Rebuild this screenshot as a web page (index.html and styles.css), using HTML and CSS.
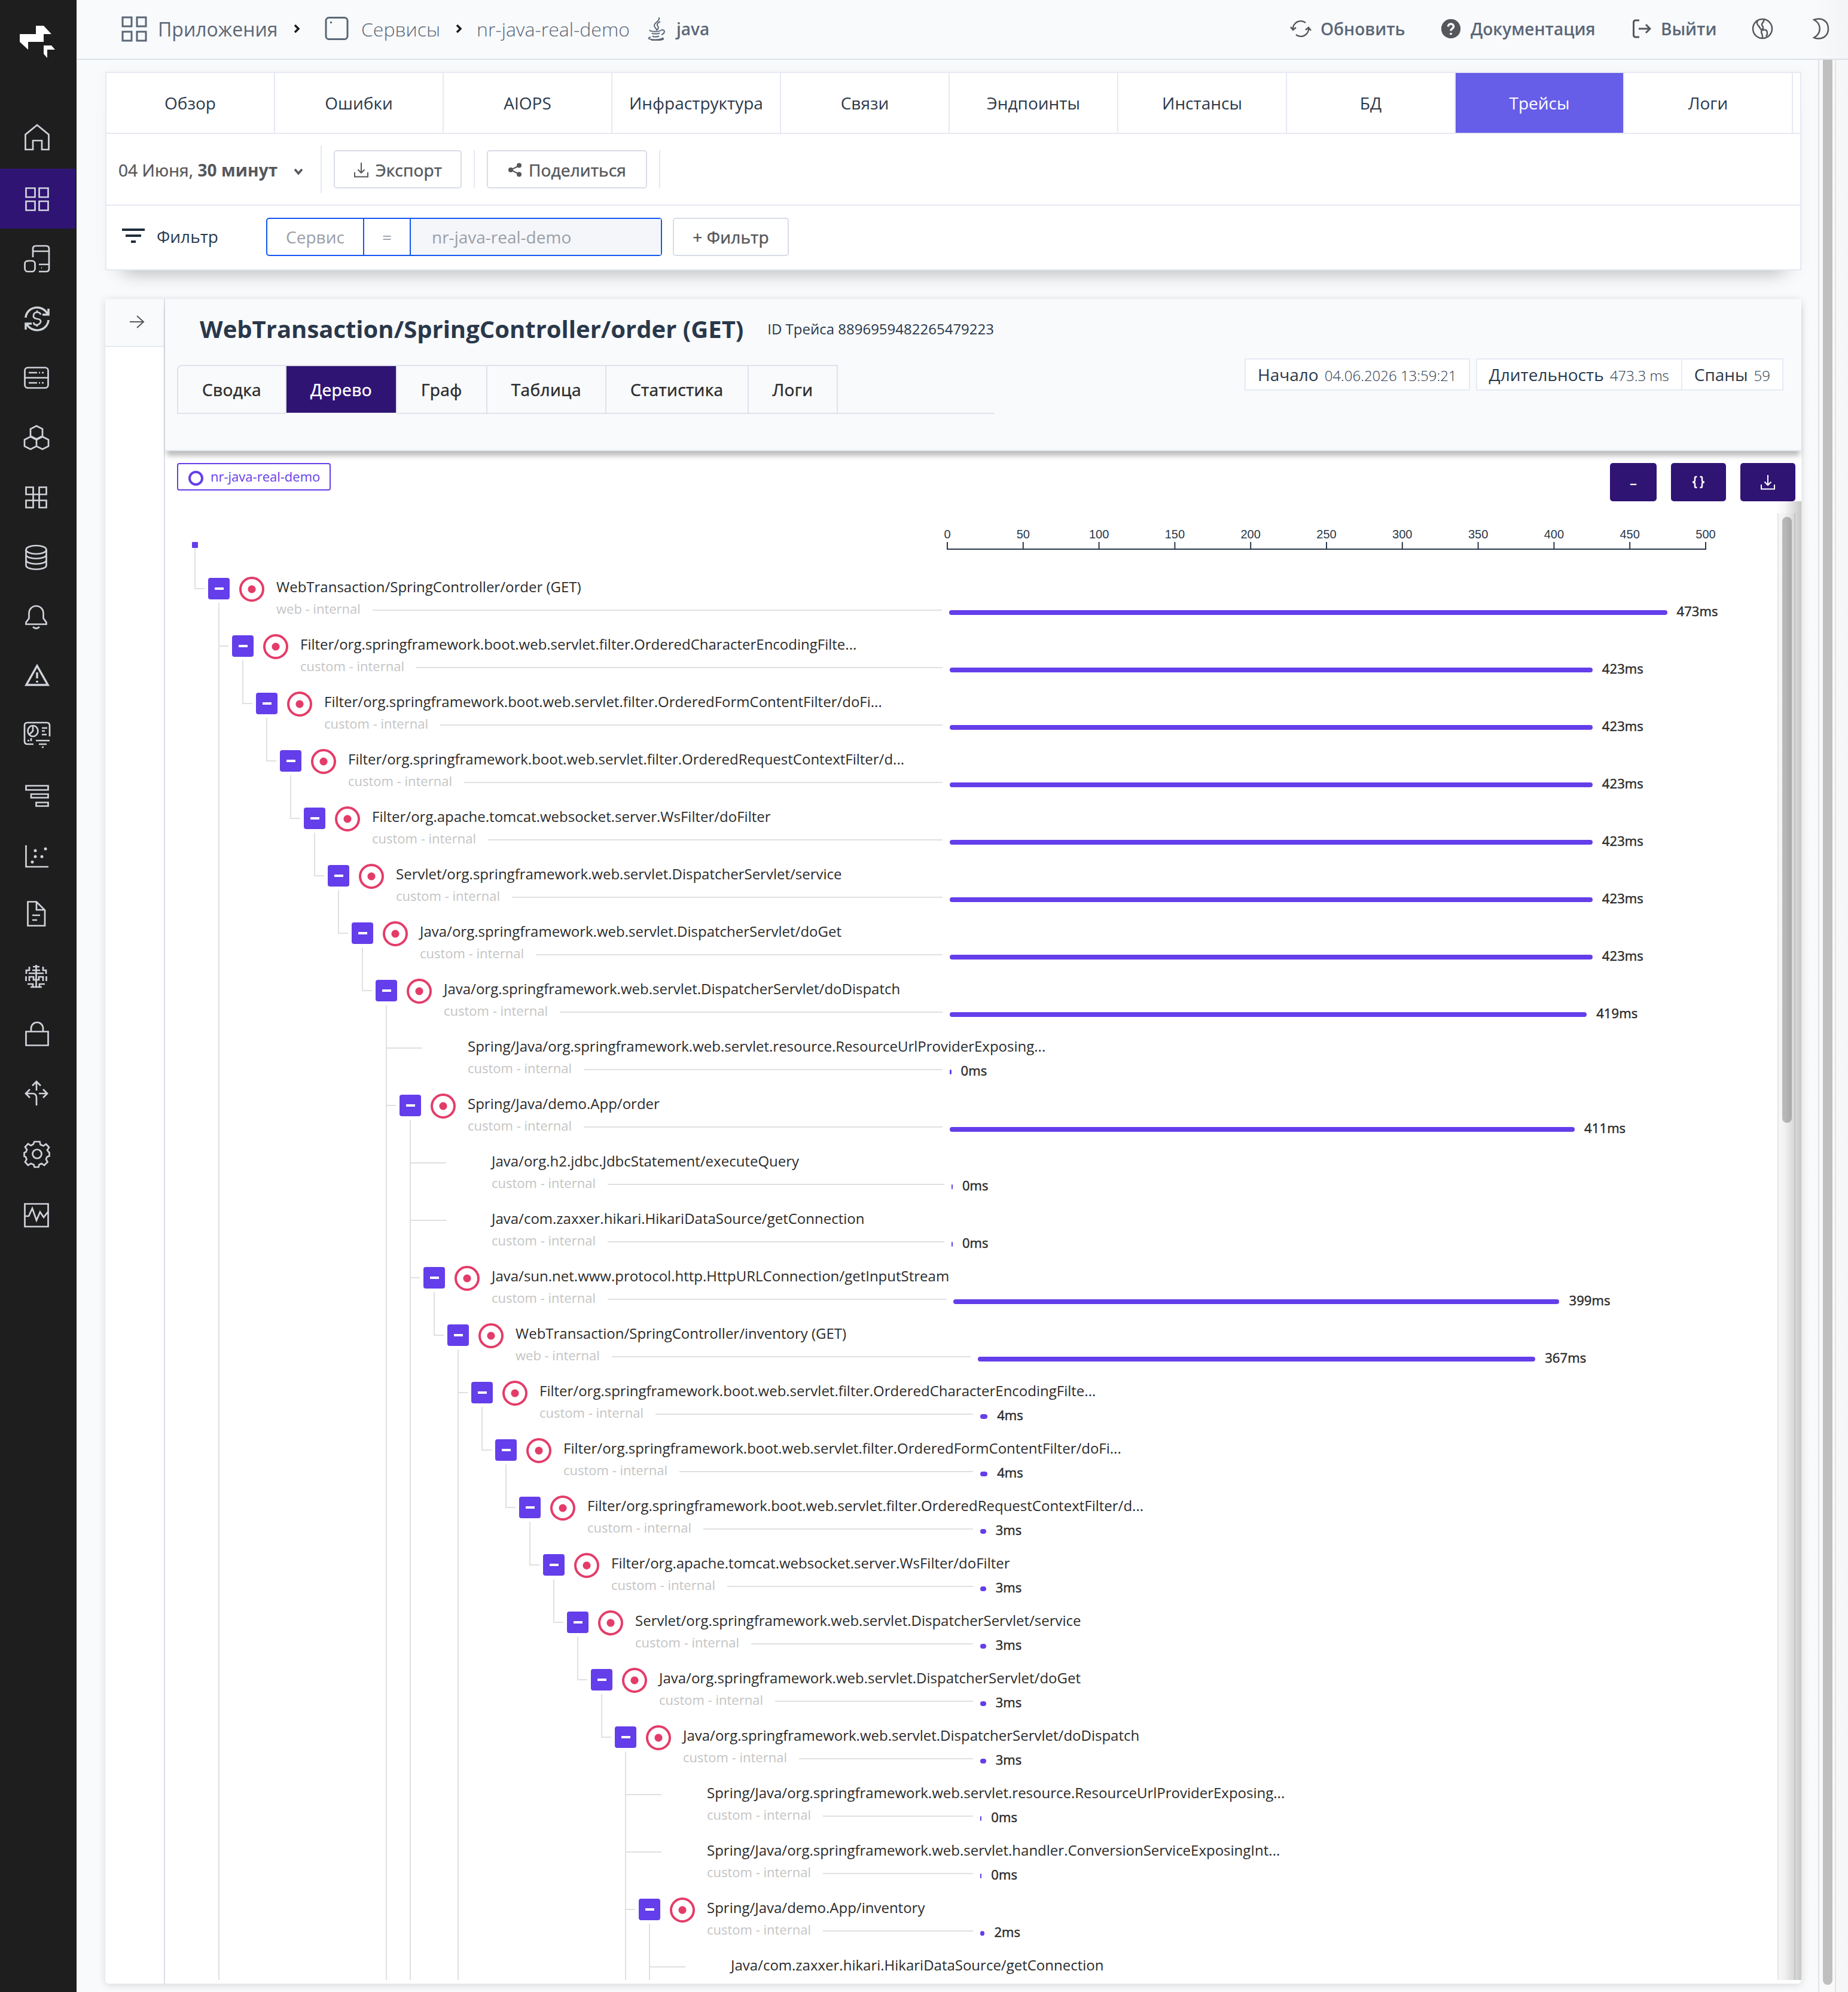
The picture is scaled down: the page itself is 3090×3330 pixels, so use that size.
FILE: index.html
```html
<!DOCTYPE html>
<html lang="ru">
<head>
  <meta charset="UTF-8">
  <meta name="viewport" content="width=device-width, initial-scale=1.0">
  <title>nr-java-real-demo — Трейсы</title>
  <link rel="stylesheet" href="styles.css">
</head>
<body>
  <div class="app">

    <nav class="sidebar">
      <a class="logo" href="#">
        <svg viewBox="0 0 126 182"><path d="M60 43h13l13 14H73v13H47v13L33 70V57h27zM73 76h13l6 7H79v14l-6-7z"/></svg>
      </a>
      <a class="nav-item" href="#"><svg viewBox="36 0 52 100"><path d="M42.500 68V43L62 27l19.500 16v25H70V53H55v15z"/></svg></a>
      <a class="nav-item active" href="#"><svg viewBox="36 0 52 100"><path d="M43.500 32.500h15v15h-15zM65.500 32.500h15v15h-15zM43.500 54.500h15v15h-15zM65.500 54.500h15v15h-15z"/></svg></a>
      <a class="nav-item" href="#"><svg viewBox="36 0 52 100"><path d="M55 48V34q0-5 5-5h17q5 0 5 5v33q0 5-5 5H65M55 38h27M65 60h17M69 66h1M46 55h1"/><rect x="41.500" y="54" width="17" height="18" rx="5"/></svg></a>
      <a class="nav-item" href="#"><svg viewBox="36 0 52 100"><path class="bold" d="M43 49A19 18 0 0 1 79 42M81 34v10H71M81 53a19 18 0 0 1-36 7M43 69V59h10"/><path d="M68 44q-1-4-6-4t-6 5 6 6 6 5-6 5-6-4M62 37v3M62 61v3"/></svg></a>
      <a class="nav-item" href="#"><svg viewBox="36 0 52 100"><rect x="41.500" y="32.500" width="39" height="34" rx="5"/><path d="M41 49.500h40M48 41h14M65 41h2M70 41h3M48 58h14M65 58h2M70 58h3"/></svg></a>
      <a class="nav-item" href="#"><svg viewBox="36 0 52 100"><path d="M61 30l10 5v12l-10 5-10-5V35zM51 48l10 5v11l-10 5-10-5V53zM71 48l10 5v11l-10 5-10-5V53z"/></svg></a>
      <a class="nav-item" href="#"><svg viewBox="36 0 52 100"><path d="M43.500 32.500h12v34h-12v-12h34v12h-12v-34h12v12h-34z"/></svg></a>
      <a class="nav-item" href="#"><svg viewBox="36 0 52 100"><ellipse cx="60.500" cy="37" rx="17" ry="7"/><path d="M43.500 37v26c0 9 34 9 34 0V37M43.500 45c0 9 34 9 34 0M43.500 54c0 9 34 9 34 0"/></svg></a>
      <a class="nav-item" href="#"><svg viewBox="36 0 52 100"><path d="M43.500 61.500h34v-3l-5-7V43a12 12 0 0 0-24 0v8.500l-5 7zM55 66q5.500 5 11 0"/></svg></a>
      <a class="nav-item" href="#"><svg viewBox="36 0 52 100"><path class="bold" d="M62 31l18 32H44zM62 42v10M62 56v3"/></svg></a>
      <a class="nav-item" href="#"><svg viewBox="36 0 52 100"><path d="M83 49V31q0-5-5-5H46q-5 0-5 5v26q0 5 5 5h10M60 56h23M65 62h13M70 67h3M70 35h9M70 40h5M70 46h8M46 56h3M52 52v5"/><ellipse cx="55" cy="40" rx="8.500" ry="9"/><path d="M55 31v9l-6 6"/></svg></a>
      <a class="nav-item" href="#"><svg viewBox="36 0 52 100"><path d="M43.500 31.500h37v7h-37zM52 45.500h28.500v6H52zM60.500 59.500h20v6h-20z"/></svg></a>
      <a class="nav-item" href="#"><svg viewBox="36 0 52 100"><path d="M43.500 31v36H81"/><g class="dots"><circle cx="54" cy="59" r="2.500"/><circle cx="59" cy="40" r="2.500"/><circle cx="59" cy="50" r="2.500"/><circle cx="70" cy="50" r="2.500"/><circle cx="76" cy="37" r="2.500"/></g></svg></a>
      <a class="nav-item" href="#"><svg viewBox="36 0 52 100"><path d="M46.500 25.500H61l14 14v26H46.500zM61 26v13h14M54 48h13M54 56h8"/></svg></a>
      <a class="nav-item" href="#"><svg viewBox="36 0 52 100"><path d="M60.500 31v37M51 68h19M55 34h11M49 34v6h-5v6M72 34v6h5v6M54 40h13M48 45h25M43.500 50v8M77.500 50v8M49 58v-7h7v5h9v-5h7v7M46 63h9v4M75 63h-9v4"/></svg></a>
      <a class="nav-item" href="#"><svg viewBox="36 0 52 100"><path d="M43.500 42.500h37v23h-37zM52 42v-5a10 10 0 0 1 20 0v5"/></svg></a>
      <a class="nav-item" href="#"><svg viewBox="36 0 52 100"><path d="M61 66V53q0-7-7-7H42M50 39l-7 7 7 7M61 41V27M54 33l7-7 7 7M65 46h14M72 39l7 7-7 7"/></svg></a>
      <a class="nav-item" href="#"><svg viewBox="36 0 52 100"><path d="M57.500 26.500h9l1 5 5 2 4.500-3 5 5.500-3 4.500 2 3 1.500 1v6l-4 1.500-1.500 4 2.500 4.500-5.500 5.500-4.500-3-4 2-1 4h-7l-1-4-5-2-4.500 3-5-5.500 2.500-4.500-1.500-4-2.500-1v-6l3-1.500 1.500-3.500-3-4.500 5-5.500 4.500 3 4-2z"/><circle cx="62" cy="47" r="7.500"/></svg></a>
      <a class="nav-item" href="#"><svg viewBox="36 0 52 100"><path d="M41.500 30.500h39v38h-39zM42 51h6l6-13 7 20 6-14 6 9 7-9"/></svg></a>
    </nav>

    <div class="page">
      <header class="topbar">
        <div class="crumbs">
          <svg class="crumb-grid" viewBox="0 0 44 44"><path d="M3 3h15v15H3zM27 3h15v15H27zM3 27h15v15H3zM27 27h15v15H27z"/></svg>
          <span class="crumb crumb-main">Приложения</span>
          <svg class="chevron" viewBox="0 0 12 16"><path d="M3 2l6 6-6 6"/></svg>
          <svg class="crumb-app" viewBox="0 0 42 42"><rect x="3" y="2.500" width="36" height="36" rx="5"/><path d="M10 10.500h3"/></svg>
          <span class="crumb crumb-services">Сервисы</span>
          <svg class="chevron" viewBox="0 0 12 16"><path d="M3 2l6 6-6 6"/></svg>
          <span class="crumb crumb-demo">nr-java-real-demo</span>
          <svg class="crumb-java" viewBox="0 0 30 40"><path d="M20 1c2 7-9 9-8 14 0 3 4 4 4 8M22 8c-6 3-6 5-4 8s0 5-2 6M5 22c-3 3 16 4 19 0M24 22c7-1 6 6 0 8M8 27c1 2 11 2 13 0M9 32c1 2 9 2 11 0M6 34c-13 4 16 7 21 1M7 39c8 1 17 0 21-2"/></svg>
          <span class="crumb-lang">java</span>
        </div>
        <div class="actions">
          <svg class="ico-refresh" viewBox="0 0 36 30"><path d="M5 17A13 13 0 0 1 26 5M1 12l4 5 5-4M31 13a13 13 0 0 1-21 12M26 17l5-4 4 5"/></svg>
          <span class="act-refresh">Обновить</span>
          <svg class="ico-help" viewBox="0 0 32 32"><circle cx="16" cy="16" r="15"/><path d="M11.500 12.500c0-6 9-6 9 0 0 3-4.500 3.500-4.500 7M16 23v3"/></svg>
          <span class="act-docs">Документация</span>
          <svg class="ico-exit" viewBox="0 0 32 32"><path d="M12 2H6Q2.500 2 2.500 5.500v21Q2.500 30 6 30h6M11 16h19M23 9l7 7-7 7"/></svg>
          <span class="act-exit">Выйти</span>
          <svg class="ico-globe" viewBox="0 0 36 36"><circle cx="18" cy="18" r="16"/><path d="M10 4c-3 5 0 8 2 10s2 5 5 6 3-1 6 0 3 4 3 6-1 3-2 5M20 2c2 4-2 5-3 8s3 4 2 7-3 3-3 6 3 4 2 11"/></svg>
          <svg class="ico-moon" viewBox="0 0 28 36"><path d="M2 3c14-5 24 3 24 15S16 38 2 33c13-7 13-23 0-30z"/></svg>
        </div>
      </header>

      <div class="content">
        <main class="main">

          <section class="filters">
            <div class="tabs">
              <a class="tab">Обзор</a>
              <a class="tab">Ошибки</a>
              <a class="tab">AIOPS</a>
              <a class="tab">Инфраструктура</a>
              <a class="tab">Связи</a>
              <a class="tab">Эндпоинты</a>
              <a class="tab">Инстансы</a>
              <a class="tab">БД</a>
              <a class="tab active">Трейсы</a>
              <a class="tab">Логи</a>
            </div>
            <div class="tools">
              <div class="period"><span>04 Июня, <b>30 минут</b></span><svg viewBox="0 0 18 12"><path d="M3 2l6 7 6-7"/></svg></div>
              <div class="tool"><button class="btn btn-export"><svg viewBox="0 0 26 26"><path d="M13 1v17M7.500 12.500L13 18l5.500-5.500M2 17v7.500h22V17"/></svg>Экспорт</button></div>
              <div class="tool"><button class="btn btn-share"><svg class="share" viewBox="0 0 24 24"><path d="M19 5L5 12l14 7"/><circle cx="19" cy="4.500" r="4"/><circle cx="5" cy="12" r="4"/><circle cx="19" cy="19.500" r="4"/></svg>Поделиться</button></div>
            </div>
            <div class="filter-row">
              <svg class="ico-filter" viewBox="0 0 38 24"><path d="M0 2h38M6 12h26M15 22h8"/></svg>
              <span class="filter-label">Фильтр</span>
              <div class="cond">
                <span class="cond-key">Сервис</span>
                <span class="cond-op">=</span>
                <span class="cond-val">nr-java-real-demo</span>
              </div>
              <button class="btn btn-add">+ Фильтр</button>
            </div>
          </section>

          <section class="panel">
            <aside class="panel-side">
              <div class="expand"><svg viewBox="0 0 26 24"><path d="M1 12h23M13 2l11 10-11 10"/></svg></div>
            </aside>
            <div class="panel-body">
              <div class="panel-head">
                <div class="head-left">
                  <div class="title-row">
                    <h1>WebTransaction/SpringController/order (GET)</h1>
                    <span class="trace-id">ID Трейса 8896959482265479223</span>
                  </div>
                  <div class="views">
                    <a class="view">Сводка</a>
                    <a class="view active">Дерево</a>
                    <a class="view">Граф</a>
                    <a class="view">Таблица</a>
                    <a class="view">Статистика</a>
                    <a class="view">Логи</a>
                  </div>
                </div>
                <div class="meta">
                  <div class="meta-box">Начало<small>04.06.2026 13:59:21</small></div>
                  <div class="meta-box">Длительность<small>473.3 ms</small></div>
                  <div class="meta-box joined">Спаны<small>59</small></div>
                </div>
              </div>

              <div class="trace-bar">
                <span class="service"><i></i>nr-java-real-demo</span>
                <div class="trace-actions">
                  <button class="dark collapse">–</button>
                  <button class="dark json"><svg viewBox="0 0 26 26"><path d="M10.500 4H9Q7 4 7 6v4q0 3-4 3 4 0 4 3v4q0 2 2 2h1.500M15.500 4H17q2 0 2 2v4q0 3 4 3-4 0-4 3v4q0 2-2 2h-1.500"/></svg></button>
                  <button class="dark save"><svg viewBox="0 0 26 26"><path d="M13 1v17M7.500 12.500L13 18l5.500-5.500M2 17v7.500h22V17"/></svg></button>
                </div>
              </div>

              <div class="trace">
                <div class="chart">
                  <div class="axis-row">
                    <div class="root"></div>
                    <svg class="axis" id="axis" width="1320" height="98"></svg>
                  </div>
                  <div id="tree"></div>
                </div>
                <div class="scroll"><div class="thumb"></div></div>
                <div class="edge"></div>
              </div>
            </div>
          </section>

        </main>
        <div class="page-scroll"><div class="page-thumb"></div></div>
      </div>
    </div>
  </div>

  <script src="script.js"></script>
</body>
</html>
```
FILE: script.js
```js
// pixels per millisecond on the time axis
const SCALE = 2.536;
// distance from the first guide column to the axis zero
const AXIS_X = 1259;
const STEP = 40;

// more: the span has other children below the visible area
const spans = [
  { level: 0, name: 'WebTransaction/SpringController/order (GET)', type: 'web', start: 1, dur: 473.6, ms: 473, more: true },
  { level: 1, name: 'Filter/org.springframework.boot.web.servlet.filter.OrderedCharacterEncodingFilte...', start: 1.7, dur: 423.7, ms: 423 },
  { level: 2, name: 'Filter/org.springframework.boot.web.servlet.filter.OrderedFormContentFilter/doFi...', start: 1.7, dur: 423.7, ms: 423 },
  { level: 3, name: 'Filter/org.springframework.boot.web.servlet.filter.OrderedRequestContextFilter/d...', start: 1.7, dur: 423.7, ms: 423 },
  { level: 4, name: 'Filter/org.apache.tomcat.websocket.server.WsFilter/doFilter', start: 1.7, dur: 423.7, ms: 423 },
  { level: 5, name: 'Servlet/org.springframework.web.servlet.DispatcherServlet/service', start: 1.7, dur: 423.7, ms: 423 },
  { level: 6, name: 'Java/org.springframework.web.servlet.DispatcherServlet/doGet', start: 1.7, dur: 423.7, ms: 423 },
  { level: 7, name: 'Java/org.springframework.web.servlet.DispatcherServlet/doDispatch', start: 1.7, dur: 419.9, ms: 419, more: true },
  { level: 8, name: 'Spring/Java/org.springframework.web.servlet.resource.ResourceUrlProviderExposing...', start: 1.7, dur: 0.9, ms: 0, leaf: true },
  { level: 8, name: 'Spring/Java/demo.App/order', start: 1.7, dur: 412, ms: 411, more: true },
  { level: 9, name: 'Java/org.h2.jdbc.JdbcStatement/executeQuery', start: 2.8, dur: 0.7, ms: 0, leaf: true },
  { level: 9, name: 'Java/com.zaxxer.hikari.HikariDataSource/getConnection', start: 2.8, dur: 0.7, ms: 0, leaf: true },
  { level: 9, name: 'Java/sun.net.www.protocol.http.HttpURLConnection/getInputStream', start: 3.8, dur: 399.8, ms: 399 },
  { level: 10, name: 'WebTransaction/SpringController/inventory (GET)', type: 'web', start: 19.9, dur: 367.8, ms: 367, more: true },
  { level: 11, name: 'Filter/org.springframework.boot.web.servlet.filter.OrderedCharacterEncodingFilte...', start: 21.8, dur: 4.7, ms: 4 },
  { level: 12, name: 'Filter/org.springframework.boot.web.servlet.filter.OrderedFormContentFilter/doFi...', start: 21.8, dur: 4.7, ms: 4 },
  { level: 13, name: 'Filter/org.springframework.boot.web.servlet.filter.OrderedRequestContextFilter/d...', start: 21.8, dur: 3.7, ms: 3 },
  { level: 14, name: 'Filter/org.apache.tomcat.websocket.server.WsFilter/doFilter', start: 21.8, dur: 3.7, ms: 3 },
  { level: 15, name: 'Servlet/org.springframework.web.servlet.DispatcherServlet/service', start: 21.8, dur: 3.7, ms: 3 },
  { level: 16, name: 'Java/org.springframework.web.servlet.DispatcherServlet/doGet', start: 21.8, dur: 3.7, ms: 3 },
  { level: 17, name: 'Java/org.springframework.web.servlet.DispatcherServlet/doDispatch', start: 21.8, dur: 3.7, ms: 3, more: true },
  { level: 18, name: 'Spring/Java/org.springframework.web.servlet.resource.ResourceUrlProviderExposing...', start: 21.8, dur: 0.8, ms: 0, leaf: true },
  { level: 18, name: 'Spring/Java/org.springframework.web.servlet.handler.ConversionServiceExposingInt...', start: 21.8, dur: 0.8, ms: 0, leaf: true },
  { level: 18, name: 'Spring/Java/demo.App/inventory', start: 21.8, dur: 2.8, ms: 2, more: true },
  { level: 19, name: 'Java/com.zaxxer.hikari.HikariDataSource/getConnection', leaf: true }
];

// does the guide of the parent at this level go on under row i
function goesOn(i, parentLevel) {
  if (parentLevel < 0) return false;
  for (let j = i + 1; j < spans.length; j++) {
    if (spans[j].level === parentLevel + 1) return true;
    if (spans[j].level <= parentLevel) return false;
  }
  for (let j = i; j >= 0; j--) {
    if (spans[j].level === parentLevel) return !!spans[j].more;
  }
  return false;
}

function renderInfo(span) {
  if (span.dur === undefined) return '';
  const textX = 137 + span.level * STEP;
  const lead = AXIS_X + span.start * SCALE - 12 - textX;
  return `<div class="info">
    <div class="lead" style="width:${lead.toFixed(1)}px">${span.type || 'custom'} - internal</div>
    <div class="bar" style="width:${(span.dur * SCALE).toFixed(1)}px"></div>
    <div class="ms">${span.ms}ms</div>
  </div>`;
}

function renderRow(span, i) {
  let guides = '';
  for (let k = -1; k < span.level - 1; k++) {
    guides += `<i class="guide${goesOn(i, k) ? ' line' : ''}"></i>`;
  }
  guides += `<i class="elbow${goesOn(i, span.level - 1) ? ' line' : ''}${span.leaf ? ' leaf' : ''}"></i>`;

  const icons = span.leaf ? '' : '<span class="toggle"></span><span class="target"></span>';

  return `<div class="row">${guides}${icons}
    <div class="span">
      <div class="name">${span.name}</div>
      ${renderInfo(span)}
    </div>
  </div>`;
}

function renderAxis() {
  let out = '<path d="M24 80H1292"/>';
  for (let v = 0; v <= 500; v += 50) {
    const x = 24 + v * SCALE;
    out += `<path d="M${x} 68V81"/><text x="${x}" y="62">${v}</text>`;
  }
  return out;
}

document.getElementById('axis').innerHTML = renderAxis();
document.getElementById('tree').innerHTML = spans.map(renderRow).join('');
```
FILE: styles.css
```css
* {
  box-sizing: border-box;
}

body {
  margin: 0;
  font-family: 'Open Sans', 'Noto Sans', sans-serif;
  font-size: 28px;
  color: #2b2b2b;
  background: #f9fafc;
}

a {
  color: inherit;
  text-decoration: none;
}

svg {
  display: block;
  flex: none;
  fill: none;
  stroke: #55575b;
  stroke-width: 2.5;
}

button {
  font-family: inherit;
}

.app {
  display: flex;
  width: 3090px;
  height: 3330px;
  overflow: hidden;
}

/* sidebar */
.sidebar {
  width: 128px;
  flex: none;
  background: #1e1e1e;
}

.logo svg {
  width: 126px;
  height: 182px;
  fill: #fff;
  stroke: none;
}

.nav-item {
  display: flex;
  width: 126px;
  height: 100px;
  padding-left: 36px;
}

.nav-item.active {
  background: #2f1474;
}

.nav-item svg {
  width: 52px;
  height: 100px;
  stroke: #d0d3da;
  stroke-width: 2.7;
}

.nav-item .bold {
  stroke-width: 3.5;
}

.nav-item .dots {
  fill: #d0d3da;
  stroke: none;
}

/* top bar */
.page {
  width: 2962px;
  display: flex;
  flex-direction: column;
}

.topbar {
  height: 100px;
  flex: none;
  display: flex;
  justify-content: space-between;
  border-bottom: 2px solid #dbe1e8;
  padding: 0 31px 0 74px;
  background: linear-gradient(to right, rgba(0, 0, 0, 0) 2900px, rgba(0, 0, 0, 0.025));
}

.crumbs,
.actions {
  display: flex;
  align-items: center;
  height: 96px;
  color: #5a6776;
  white-space: nowrap;
}

.crumbs svg {
  stroke: #5a6776;
  stroke-width: 3;
}

.crumb {
  font-size: 32px;
}

.crumb-grid {
  width: 44px;
  height: 44px;
}

.crumb-main {
  width: 226px;
  margin-left: 18px;
}

.crumbs .chevron {
  width: 12px;
  height: 16px;
  stroke: #1b1b1b;
  stroke-width: 3.5;
}

.crumb-app {
  width: 42px;
  height: 42px;
  margin: 0 20px 0 40px;
}

.crumb-services {
  width: 157px;
  font-weight: 300;
}

.crumb-demo {
  width: 256px;
  margin-left: 24px;
  font-weight: 300;
}

.crumbs .crumb-java {
  width: 30px;
  height: 40px;
  margin: 0 19px 0 29px;
  stroke-width: 2;
}

.crumb-lang {
  font-weight: 600;
}

.actions {
  font-weight: 600;
}

.ico-refresh {
  width: 36px;
  height: 30px;
}

.act-refresh {
  width: 202px;
  margin-left: 15px;
}

.ico-help {
  width: 32px;
  height: 32px;
}

.ico-help circle {
  fill: #55575b;
}

.ico-help path {
  stroke: #fff;
  stroke-width: 3.5;
}

.act-docs {
  width: 270px;
  margin-left: 17px;
}

.ico-exit {
  width: 32px;
  height: 32px;
  stroke-width: 3;
}

.act-exit {
  width: 152px;
  margin-left: 16px;
}

.ico-globe {
  width: 36px;
  height: 36px;
  margin-right: 66px;
}

.ico-moon {
  width: 28px;
  height: 36px;
}

/* page content */
.content {
  display: flex;
  flex: 1;
  background: linear-gradient(to right, rgba(0, 0, 0, 0) 2900px, rgba(0, 0, 0, 0.02));
}

.main {
  width: 2912px;
  padding: 20px 28px 0 48px;
}

.page-scroll {
  width: 30px;
  border: solid #e3e3e5;
  border-width: 0 2px;
  padding: 0 4px 0 6px;
  background: #f9f9fa;
}

.page-thumb {
  height: 3218px;
  border-radius: 0 0 8px 8px;
  background: #bfbfbf;
}

/* filters */
.filters {
  height: 332px;
  background: #fff;
  border: 2px solid #e6e9f4;
  box-shadow: 0 34px 30px -30px rgba(0, 0, 0, 0.26), 0 0 24px rgba(0, 0, 0, 0.03);
}

.tabs {
  display: flex;
  height: 102px;
  border-bottom: 2px solid #e6e9f4;
}

.tab {
  width: 282px;
  border-right: 2px solid #e6e9f4;
  text-align: center;
  line-height: 100px;
  color: #2b394a;
}

.tab.active {
  background: #665de8;
  color: #fff;
}

.tools {
  display: flex;
  align-items: center;
  height: 120px;
  border-bottom: 2px solid #e6e9f4;
}

.period {
  display: flex;
  align-items: center;
  justify-content: space-between;
  width: 360px;
  height: 80px;
  padding: 1px 28px 0 20px;
  border-right: 2px solid #e6e9f4;
  color: #55575b;
  letter-spacing: 0.1px;
  -webkit-text-stroke: 0.4px;
}

.period b {
  -webkit-text-stroke: 0;
}

.period svg {
  width: 18px;
  height: 12px;
  margin-top: 6px;
  stroke-width: 3.5;
}

.tool {
  padding: 0 20px;
  border-right: 2px solid #e6e9f4;
}

.btn {
  display: flex;
  align-items: center;
  justify-content: center;
  height: 64px;
  padding: 1px 0 0;
  border: 2px solid #d8dce7;
  border-radius: 5px;
  background: #fff;
  color: #55575b;
  font-size: 28px;
  letter-spacing: 0.15px;
  -webkit-text-stroke: 0.5px;
}

.btn-export {
  width: 214px;
}

.btn-share {
  width: 268px;
}

.btn svg {
  width: 26px;
  height: 26px;
  margin-right: 11px;
  stroke-width: 2;
}

.btn .share {
  width: 24px;
  height: 24px;
}

.share circle {
  fill: #55575b;
  stroke: none;
}

.filter-row {
  display: flex;
  align-items: center;
  height: 104px;
  padding-left: 26px;
}

.ico-filter {
  width: 38px;
  height: 24px;
  margin-bottom: 4px;
  stroke: #1f2d3d;
  stroke-width: 4;
}

.filter-label {
  width: 183px;
  margin: 0 0 2px 20px;
  color: #2b394a;
}

.cond {
  display: flex;
  width: 662px;
  height: 64px;
  line-height: 60px;
  border: 2px solid #1557f2;
  border-radius: 5px;
  color: #9b9ea5;
}

.cond-key {
  width: 162px;
  text-align: center;
  border-right: 2px solid #1557f2;
}

.cond-op {
  width: 78px;
  text-align: center;
  border-right: 2px solid #1557f2;
}

.cond-val {
  flex: 1;
  padding-left: 35px;
  background: #f4f6fa;
}

.btn-add {
  width: 194px;
  margin-left: 18px;
  padding: 0;
}

/* trace panel */
.panel {
  display: flex;
  height: 2816px;
  margin-top: 48px;
  border-radius: 0 0 6px 6px;
  background: #fff;
  box-shadow: 0 2px 14px rgba(0, 0, 0, 0.14);
}

.panel-side {
  width: 100px;
  border-right: 2px solid #dcdfe8;
}

.expand {
  display: flex;
  align-items: center;
  height: 80px;
  padding-left: 40px;
  background: #f9fafc;
  border-bottom: 2px solid #e6e9f4;
}

.expand svg {
  width: 26px;
  height: 24px;
  margin-bottom: 2px;
  stroke-width: 2;
}

.panel-body {
  width: 2736px;
}

.panel-head {
  display: flex;
  justify-content: space-between;
  height: 254px;
  padding: 20px 30px 0 20px;
  background: #f9fafc;
  border-bottom: 2px solid #e6e9f4;
  box-shadow: 0 11px 8px -3px rgba(0, 0, 0, 0.26);
}

.head-left {
  width: 1366px;
}

.title-row {
  display: flex;
  align-items: center;
  justify-content: space-between;
  height: 60px;
  padding-left: 38px;
  white-space: nowrap;
}

h1 {
  margin: 0;
  font-size: 40px;
  line-height: 60px;
  font-weight: 700;
  color: #29384a;
}

.trace-id {
  margin-bottom: 1px;
  font-size: 24px;
  color: #29384a;
}

.views {
  display: flex;
  height: 82px;
  margin-top: 30px;
}

.view {
  padding: 0 40px;
  line-height: 79px;
  border: 2px solid #e0e2ec;
  border-left: 0;
  letter-spacing: 0.38px;
  -webkit-text-stroke: 0.5px;
}

.view:first-child {
  border-left: 2px solid #e0e2ec;
  border-top-left-radius: 8px;
}

.view.active {
  background: #2f1474;
  background-clip: padding-box;
  color: #fff;
  border-bottom-color: #fff;
}

.views::after {
  content: "";
  flex: 1;
  border-bottom: 2px solid #e0e2ec;
}

.meta {
  display: flex;
  height: 54px;
  margin-top: 79px;
}

.meta-box {
  padding: 0 20px;
  margin-left: 10px;
  line-height: 50px;
  border: 2px solid #e8eaf5;
  background: #fff;
  color: #29384a;
}

.meta-box.joined {
  margin-left: 0;
  border-left: 0;
}

.meta small {
  margin-left: 10px;
  font-size: 24px;
  font-weight: 300;
}

.trace-bar {
  display: flex;
  justify-content: space-between;
  height: 84px;
  padding: 20px 10px 0 20px;
}

.service {
  display: flex;
  align-items: center;
  width: 257px;
  height: 46px;
  padding: 0 0 2px 17px;
  border: 2px solid #643eea;
  border-radius: 4px;
  color: #643eea;
  font-size: 22px;
  white-space: nowrap;
}

.service i {
  width: 25px;
  height: 25px;
  margin: 6px 12px 0 0;
  border: 4px solid #643eea;
  border-radius: 50%;
}

.trace-actions {
  display: flex;
  gap: 24px;
}

.dark {
  display: flex;
  align-items: center;
  justify-content: center;
  width: 92px;
  height: 64px;
  padding: 0;
  border: 0;
  border-radius: 5px;
  background: #2f1474;
  color: #fff;
  font-size: 24px;
  font-weight: 600;
}

.collapse {
  width: 78px;
}

.dark svg {
  width: 26px;
  height: 26px;
  stroke: #fff;
  stroke-width: 2;
}

.json svg {
  stroke-width: 2.5;
}

/* tree and timeline */
.trace {
  position: relative;
  display: flex;
  height: 2472px;
  overflow: hidden;
}

.chart {
  width: 2696px;
}

.axis-row {
  display: flex;
  height: 98px;
}

.root {
  position: relative;
  width: 10px;
  height: 10px;
  margin: 68px 1229px 0 45px;
  background: #643eea;
  border-radius: 1px;
}

.root::after {
  content: "";
  position: absolute;
  left: 4px;
  top: 10px;
  width: 2px;
  height: 20px;
  background: #e0e0e0;
}

.axis {
  stroke: #29384a;
  stroke-width: 2;
}

.axis text {
  fill: #29384a;
  stroke: none;
  font: 20px 'Liberation Sans', sans-serif;
  text-anchor: middle;
}

.row {
  display: flex;
  height: 96px;
  padding-left: 49px;
}

.guide {
  width: 40px;
  flex: none;
}

.guide.line {
  border-left: 2px solid #e0e0e0;
}

.elbow {
  position: relative;
  width: 23px;
  flex: none;
}

.elbow.leaf {
  width: 137px;
}

.elbow::before,
.elbow::after {
  content: "";
  position: absolute;
  left: 0;
  background: #e0e0e0;
}

.elbow::before {
  top: 0;
  width: 2px;
  height: 49px;
}

.elbow.line::before {
  height: 96px;
}

.elbow::after {
  top: 47px;
  width: 17px;
  height: 2px;
}

.elbow.leaf::after {
  width: 61px;
}

.toggle {
  position: relative;
  width: 36px;
  height: 36px;
  flex: none;
  margin-top: 30px;
  border-radius: 4px;
  background: #643eea;
}

.toggle::before {
  content: "";
  position: absolute;
  left: 11px;
  top: 16px;
  width: 15px;
  height: 4px;
  background: #fff;
}

/* guide that leads down to the children */
.toggle::after {
  content: "";
  position: absolute;
  left: 17px;
  top: 42px;
  width: 2px;
  height: 24px;
  background: #e0e0e0;
}

.target {
  width: 42px;
  height: 42px;
  flex: none;
  margin: 28px 20px 0 16px;
  border: 4px solid #e43c69;
  border-radius: 50%;
  background: radial-gradient(circle, #e43c69 6px, transparent 7px);
}

.span {
  padding-top: 27px;
  white-space: nowrap;
}

.name {
  font-size: 24px;
  line-height: 36px;
}

.info {
  display: flex;
  align-items: center;
  height: 34px;
  margin-top: 1px;
}

.lead {
  display: flex;
  align-items: center;
  margin-right: 12px;
  font-size: 22px;
  line-height: 34px;
  color: #c4c4c4;
}

.lead::after {
  content: "";
  flex: 1;
  height: 2px;
  margin: 6px 0 0 20px;
  background: #e0e0e0;
}

.bar {
  height: 8px;
  margin-top: 14px;
  border-radius: 4px;
  background: #643eea;
}

.ms {
  margin: 7px 0 0 16px;
  font-size: 22px;
  letter-spacing: 0.1px;
  -webkit-text-stroke: 0.5px;
}

.scroll {
  width: 30px;
  margin-top: 20px;
  padding: 6px 4px 0 6px;
  border: solid #e6e6e6;
  border-width: 0 2px;
  background: #fafafa;
}

.thumb {
  height: 1013px;
  border-radius: 8px;
  background: #bebebe;
}

/* shade along the right border */
.edge {
  position: absolute;
  right: 0;
  top: 0;
  width: 42px;
  height: 100%;
  background: linear-gradient(to right, rgba(0, 0, 0, 0), rgba(0, 0, 0, 0.04) 35%, rgba(0, 0, 0, 0.22));
}
```
